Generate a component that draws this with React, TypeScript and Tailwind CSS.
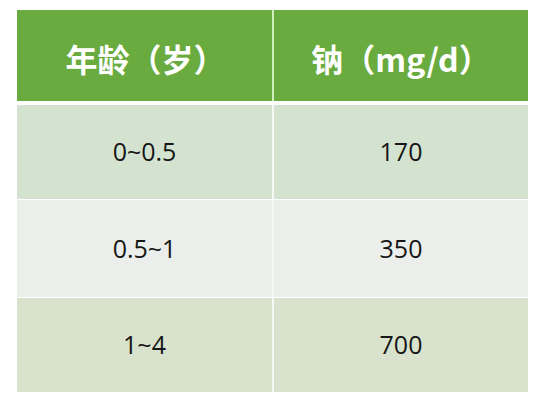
const rows = [
  { age: '0~0.5', sodium: '170', bg: 'bg-[#d4e3d0]' },
  { age: '0.5~1', sodium: '350', bg: 'bg-[#ebeeea]' },
  { age: '1~4', sodium: '700', bg: 'bg-[#d8e2cd]' },
];

const rowHeights = ['h-[94px]', 'h-[97px]', 'h-[94px]'];

export default function App() {
  return (
    <div className="w-[545px] h-[406px] bg-white pt-[10px] pl-[17px]">
      <div className="w-[511px] flex flex-col">
        <div className="grid grid-cols-[255px_254px] gap-x-[2px] bg-[#cfeebb] h-[91px]">
          <div
            className="bg-[#6aab3f] flex items-center justify-center text-white font-bold text-[32px] pt-[4px] pl-[2px]"
            style={{ fontFamily: '"Noto Sans CJK SC", sans-serif' }}
          >
            年龄（岁）
          </div>
          <div
            className="bg-[#6aab3f] flex items-center justify-center text-white font-bold text-[32px] pt-[4px]"
            style={{ fontFamily: '"Noto Sans CJK SC", sans-serif' }}
          >
            钠（mg/d）
          </div>
        </div>
        <div className="h-[4px]" />
        {rows.map((r, i) => (
          <div key={r.age}>
            {i > 0 && <div className="h-[1px]" />}
            <div
              className={`grid grid-cols-[255px_254px] gap-x-[2px] bg-[#f5f9f3] ${rowHeights[i]}`}
            >
              <div
                className={`${r.bg} flex items-center justify-center text-[#161616] text-[25px]`}
                style={{ fontFamily: '"Open Sans", sans-serif' }}
              >
                {r.age}
              </div>
              <div
                className={`${r.bg} flex items-center justify-center text-[#161616] text-[25px]`}
                style={{ fontFamily: '"Open Sans", sans-serif' }}
              >
                {r.sodium}
              </div>
            </div>
          </div>
        ))}
      </div>
    </div>
  );
}
